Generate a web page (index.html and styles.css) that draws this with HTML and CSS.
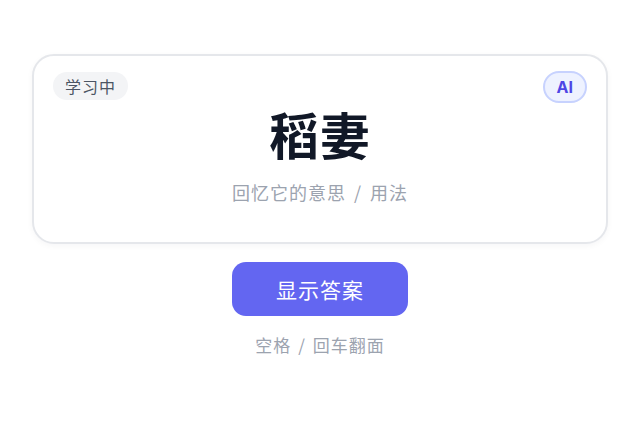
FILE: index.html
```html
<!DOCTYPE html>
<html lang="zh-CN">
<head>
  <meta charset="UTF-8">
  <meta name="viewport" content="width=device-width, initial-scale=1.0">
  <link rel="stylesheet" href="styles.css">
  <title>闪卡</title>
</head>
<body>
  <main class="study">
    <div class="card">
      <span class="badge-status">学习中</span>
      <span class="badge-ai">AI</span>
      <div class="card-word">稻妻</div>
      <div class="card-hint">回忆它的意思 / 用法</div>
    </div>

    <button class="btn-reveal">显示答案</button>
    <div class="key-hint">空格 / 回车翻面</div>
  </main>
</body>
</html>
```

FILE: styles.css
```css
body {
  margin: 0;
  padding: 0;
  background: #ffffff;
  font-family: 'Noto Sans CJK SC', sans-serif;
}

.study {
  width: 576px;
  margin: 54px auto 0;
  display: flex;
  flex-direction: column;
  align-items: center;
}

.card {
  position: relative;
  box-sizing: border-box;
  width: 100%;
  height: 190px;
  border: 2px solid #e5e7eb;
  border-radius: 22px;
  background: #fff;
  box-shadow: 0 2px 6px rgba(17, 24, 39, 0.04);
  display: flex;
  flex-direction: column;
  align-items: center;
  padding-top: 41px;
}

.badge-status {
  position: absolute;
  top: 16px;
  left: 19px;
  padding: 2px 12px;
  border-radius: 999px;
  background: #f3f4f6;
  color: #4b5563;
  font-size: 16px;
  letter-spacing: 1px;
  line-height: 24px;
}

.badge-ai {
  position: absolute;
  top: 15px;
  right: 19px;
  padding: 4px 12px;
  border: 2px solid #c7d2fe;
  border-radius: 999px;
  background: #eef2ff;
  color: #4f46e5;
  font-family: 'Inter', sans-serif;
  font-size: 16px;
  font-weight: 700;
  line-height: 20px;
}

.card-word {
  font-size: 50px;
  font-weight: 700;
  color: #111827;
  line-height: 72px;
  letter-spacing: 1px;
}

.card-hint {
  margin-top: 10px;
  font-size: 18px;
  color: #9ca3af;
  line-height: 26px;
  letter-spacing: 1px;
  word-spacing: 3px;
}

.btn-reveal {
  margin-top: 18px;
  width: 176px;
  height: 54px;
  border: none;
  border-radius: 14px;
  background: #6366f1;
  color: #fff;
  font-family: inherit;
  font-size: 21px;
  letter-spacing: 1px;
  cursor: pointer;
}

.key-hint {
  margin-top: 16px;
  font-size: 17px;
  color: #9ca3af;
  line-height: 26px;
  letter-spacing: 1px;
  word-spacing: 2px;
}
```
